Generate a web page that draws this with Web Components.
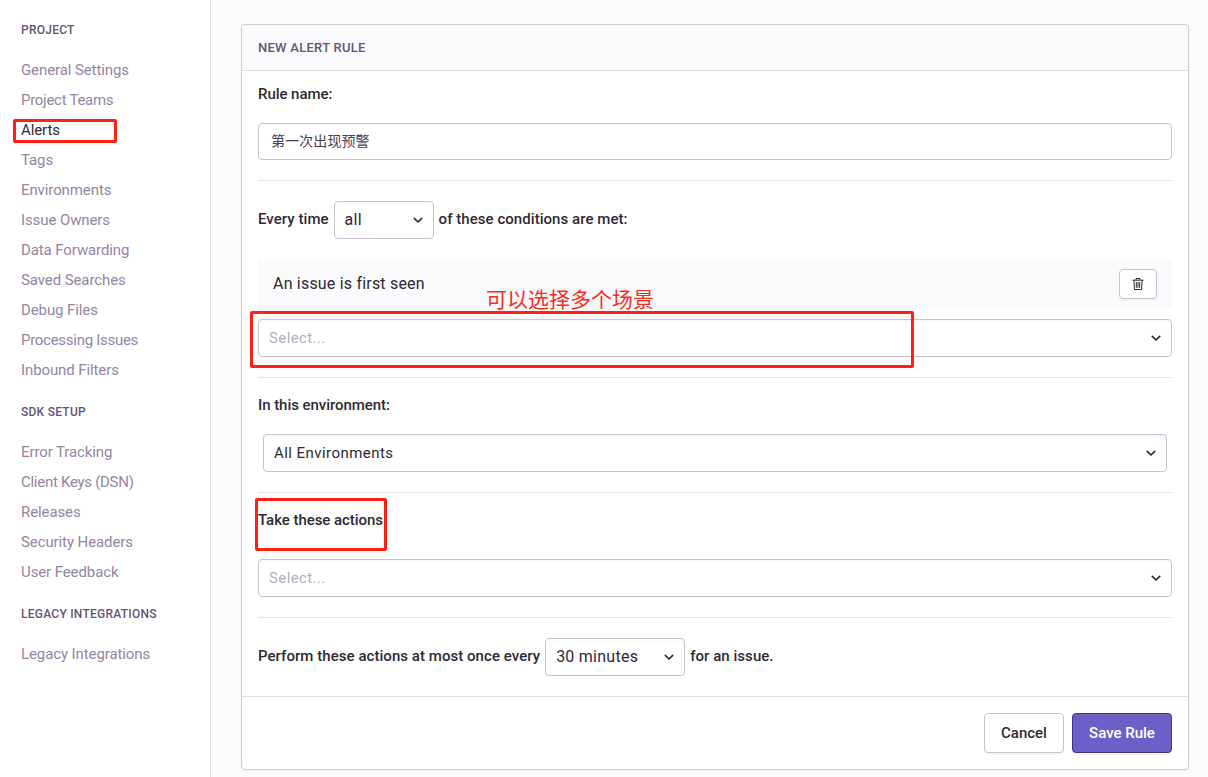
<!DOCTYPE html>
<html><head><meta charset="utf-8">
<style>
html,body{margin:0;height:777px;overflow:hidden;background:#fbfbfc}
body{font-family:Rubik,"Roboto","Noto Sans CJK SC",sans-serif;color:#2f2936}
</style></head>
<body>
<alert-page></alert-page>
<script>
const FONT = 'Roboto,"Noto Sans CJK SC",sans-serif';
const CHEV = '<svg width="12" height="12" viewBox="0 0 12 12" fill="none" stroke="#2f2936" stroke-width="1.7" stroke-linecap="round" stroke-linejoin="round"><path d="M2.3 4.4 6 8l3.7-3.6"/></svg>';
function def(name, css, html){
  customElements.define(name, class extends HTMLElement{
    constructor(){super();const r=this.attachShadow({mode:'open'});
      r.innerHTML='<style>'+css+'</style>'+html;}
  });
}
def('nav-heading',`:host{display:block;font:500 12px/16px ${FONT};color:#645574;letter-spacing:.25px;text-transform:uppercase}`,'<slot></slot>');
def('nav-item',`:host{display:block;font:400 15px/30px ${FONT};color:#9585a3;letter-spacing:-.1px}:host([active]){color:#2f2936}:host([tight]){letter-spacing:-.28px}`,'<slot></slot>');
def('side-bar',`:host{display:block;flex:0 0 211px;box-sizing:border-box;height:777px;background:#fff;border-right:1px solid #e2dbe8;padding:22px 0 0 21px}`,'<slot></slot>');
def('nav-group',`:host{display:block;margin-bottom:19px}::slotted(nav-heading){margin-bottom:17px}`,'<slot></slot>');
def('ui-select',`:host{display:flex;align-items:center;box-sizing:border-box;height:38px;background:#fff;border:1px solid #c9c0d1;border-radius:4px;padding:0 9px 0 10px;font:400 15px/20px ${FONT};color:#2f2936;letter-spacing:.45px;box-shadow:inset 0 2px 0 rgba(0,0,0,.02)}
  :host([placeholder]){color:#b4adba;letter-spacing:.4px}
  :host([compact]){font-size:16px;letter-spacing:.25px}
  span{flex:1}
  svg{display:block;flex:none}`,`<span><slot></slot></span>${CHEV}`);
def('ui-input',`:host{display:flex;align-items:center;box-sizing:border-box;height:37px;background:#fff;border:1px solid #c9c0d1;border-radius:4px;padding:0 12px 4px;font:400 14px/20px "Noto Sans CJK SC",sans-serif;color:#493e54;letter-spacing:.1px;box-shadow:inset 0 2px 0 rgba(0,0,0,.02)}`,'<slot></slot>');
def('ui-button',`:host{display:inline-flex;align-items:center;justify-content:center;box-sizing:border-box;height:40px;border:1px solid #c9c0d1;border-radius:4px;background:#fff;color:#2f2936;font:500 15px/20px ${FONT};box-shadow:0 2px 0 rgba(0,0,0,.04)}
  :host([primary]){background:#6c5fc7;border-color:#3d328e;color:#fff}
  :host([small]){width:38px;height:30px}
  svg{display:block}`,'<slot></slot>');
def('rule-label',`:host{display:block;font:500 15px/20px ${FONT};color:#2f2936;letter-spacing:-.05px}`,'<slot></slot>');
def('inline-row',`:host{display:flex;align-items:center;gap:5px;font:500 15px/20px ${FONT};color:#2f2936;letter-spacing:.05px}::slotted(span){padding-bottom:2px}`,'<slot></slot>');
def('rule-row',`:host{display:flex;align-items:center;justify-content:space-between;box-sizing:border-box;height:50px;background:#fafafc;padding:0 15px;font:400 16px/20px ${FONT};color:#2f2936;letter-spacing:.2px}`,'<slot></slot>');
def('form-section',`:host{display:block;border-bottom:1px solid #e7e3eb}:host([last]){border-bottom:0}`,'<slot></slot>');
def('red-box',`:host{position:absolute;box-sizing:border-box;border:3px solid #ff1f14;border-radius:2px;pointer-events:none}`,'');
def('red-note',`:host{position:absolute;font:400 21px/24px "Noto Sans CJK SC",sans-serif;color:#ff2a1a;white-space:nowrap}`,'<slot></slot>');
def('alert-panel',`:host{display:block;box-sizing:border-box;height:746px;background:#fff;border:1px solid #d0c9d8;border-radius:4px;box-shadow:0 1px 2px rgba(0,0,0,.05);position:relative}
  header{box-sizing:border-box;height:46px;background:#fafafc;border-bottom:1px solid #e2dbe8;border-radius:4px 4px 0 0;padding:15px 16px 0;font:500 13px/16px ${FONT};color:#645574;letter-spacing:.27px;text-transform:uppercase}
  .body{padding:0 16px}
  footer{box-sizing:border-box;height:74px;border-top:1px solid #e2dbe8;padding:16px;display:flex;justify-content:flex-end;gap:8px}`,
  `<header><slot name="title"></slot></header><div class="body"><slot></slot></div><footer><slot name="actions"></slot></footer>`);
def('alert-page',`:host{display:flex;position:relative;width:1208px;height:777px;overflow:hidden}
  main{flex:1;padding:24px 19px 0 30px;min-width:0}
  .s1{padding:13px 0 20px}.s1 rule-label{margin-bottom:19px}
  .s2{padding:20px 0 20px}.s2 inline-row{margin-bottom:20px}.s2 rule-row{margin-bottom:10px}
  .s3{padding:17px 0 20px}.s3 rule-label{margin-bottom:19px}.s3 ui-select{margin:0 5px}
  .s4{padding:17px 0 20px}.s4 rule-label{margin-bottom:29px}
  .s5{padding:20px 0 20px}
  .w-all{width:100px}.w-min{width:140px}`,
  `<side-bar>
    <nav-group><nav-heading>Project</nav-heading>
      <nav-item>General Settings</nav-item><nav-item tight>Project Teams</nav-item><nav-item active>Alerts</nav-item><nav-item>Tags</nav-item><nav-item>Environments</nav-item><nav-item>Issue Owners</nav-item><nav-item>Data Forwarding</nav-item><nav-item>Saved Searches</nav-item><nav-item>Debug Files</nav-item><nav-item tight>Processing Issues</nav-item><nav-item>Inbound Filters</nav-item></nav-group>
    <nav-group><nav-heading>SDK Setup</nav-heading>
      <nav-item>Error Tracking</nav-item><nav-item tight>Client Keys (DSN)</nav-item><nav-item>Releases</nav-item><nav-item>Security Headers</nav-item><nav-item>User Feedback</nav-item></nav-group>
    <nav-group><nav-heading>Legacy Integrations</nav-heading><nav-item>Legacy Integrations</nav-item></nav-group>
  </side-bar>
  <main><alert-panel>
    <span slot="title">New Alert Rule</span>
    <form-section class="s1"><rule-label>Rule name:</rule-label><ui-input>第一次出现预警</ui-input></form-section>
    <form-section class="s2">
      <inline-row><span>Every time</span><ui-select compact class="w-all">all</ui-select><span>of these conditions are met:</span></inline-row>
      <rule-row><span>An issue is first seen</span><ui-button small><svg width="14" height="14" viewBox="0 0 14 14" fill="none" stroke="#2f2936" stroke-width="1"><path d="M1.5 3.2h11M5 3V1.6h4V3M2.8 3.2l.7 9.3h7l.7-9.3M5.3 5v5.8M7 5v5.8M8.7 5v5.8"/></svg></ui-button></rule-row>
      <ui-select placeholder>Select...</ui-select>
    </form-section>
    <form-section class="s3"><rule-label>In this environment:</rule-label><ui-select>All Environments</ui-select></form-section>
    <form-section class="s4"><rule-label>Take these actions</rule-label><ui-select placeholder>Select...</ui-select></form-section>
    <form-section class="s5" last><inline-row><span>Perform these actions at most once every</span><ui-select compact class="w-min">30 minutes</ui-select><span>for an issue.</span></inline-row></form-section>
    <ui-button slot="actions" style="width:80px">Cancel</ui-button>
    <ui-button slot="actions" primary style="width:100px">Save Rule</ui-button>
  </alert-panel></main>
  <red-box style="left:13px;top:119px;width:104px;height:24px"></red-box>
  <red-box style="left:250px;top:311px;width:664px;height:57px"></red-box>
  <red-box style="left:255px;top:498px;width:132px;height:53px"></red-box>
  <red-note style="left:486px;top:286px">可以选择多个场景</red-note>`);
</script>
</body></html>
